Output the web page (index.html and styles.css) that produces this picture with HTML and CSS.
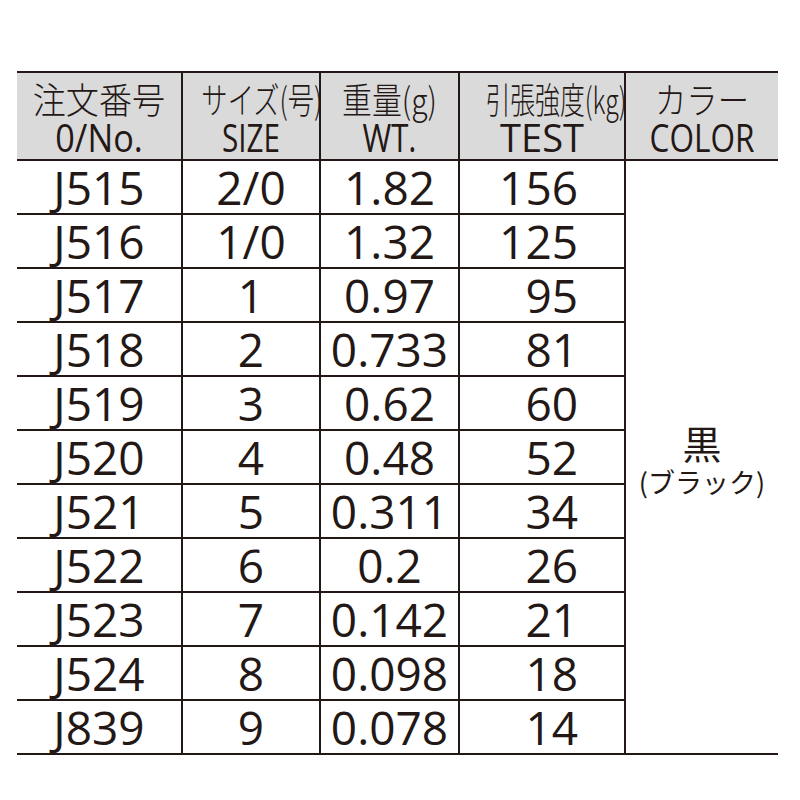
FILE: index.html
```html
<!DOCTYPE html>
<html lang="ja">
<head>
<meta charset="utf-8">
<title>Spec table</title>
<link rel="stylesheet" href="styles.css">
</head>
<body>
<table class="spec">
  <colgroup>
    <col class="c1"><col class="c2"><col class="c3"><col class="c4"><col class="c5">
  </colgroup>
  <thead>
    <tr>
      <th class="first"><span class="jp s94">注文番号</span><span class="en s90">0/No.</span></th>
      <th><span class="jp s74">サイズ(号)</span><span class="en s78">SIZE</span></th>
      <th><span class="jp s84">重量(g)</span><span class="en s82">WT.</span></th>
      <th><span class="jp s70">引張強度(kg)</span><span class="en s100">TEST</span></th>
      <th class="last"><span class="jp s89">カラー</span><span class="en s83">COLOR</span></th>
    </tr>
  </thead>
  <tbody>
    <tr><td class="first">J515</td><td>2/0</td><td>1.82</td><td class="test">156</td>
      <td class="last color" rowspan="11"><span class="kuro">黒</span><span class="black">(ブラック)</span></td></tr>
    <tr><td class="first">J516</td><td>1/0</td><td>1.32</td><td class="test">125</td></tr>
    <tr><td class="first">J517</td><td>1</td><td>0.97</td><td class="test">95</td></tr>
    <tr><td class="first">J518</td><td>2</td><td>0.733</td><td class="test">81</td></tr>
    <tr><td class="first">J519</td><td>3</td><td>0.62</td><td class="test">60</td></tr>
    <tr><td class="first">J520</td><td>4</td><td>0.48</td><td class="test">52</td></tr>
    <tr><td class="first">J521</td><td>5</td><td>0.311</td><td class="test">34</td></tr>
    <tr><td class="first">J522</td><td>6</td><td>0.2</td><td class="test">26</td></tr>
    <tr><td class="first">J523</td><td>7</td><td>0.142</td><td class="test">21</td></tr>
    <tr><td class="first">J524</td><td>8</td><td>0.098</td><td class="test">18</td></tr>
    <tr><td class="first">J839</td><td>9</td><td>0.078</td><td class="test">14</td></tr>
  </tbody>
</table>
</body>
</html>
```

FILE: styles.css
```css
html, body {
  margin: 0;
  padding: 0;
  background: #ffffff;
}

body {
  color: #231815;
  font-family: "Open Sans", "Noto Sans CJK JP", sans-serif;
}

.spec {
  border-collapse: collapse;
  table-layout: fixed;
  width: 761px;
  margin: 71px 0 0 17px;
}

.c1 { width: 165px; }
.c2 { width: 138px; }
.c3 { width: 139px; }
.c4 { width: 166px; }
.c5 { width: 153px; }

.spec th,
.spec td {
  border: 2px solid #231815;
  padding: 0;
  text-align: center;
}

.spec .first { border-left: none; }
.spec .last { border-right: none; }

.spec thead tr { height: 88px; }

.spec th {
  background: #dadada;
  font-weight: normal;
  vertical-align: top;
  padding-top: 5px;
  white-space: nowrap;
}

.jp {
  display: block;
  height: 40px;
  line-height: 40px;
  font-family: "Noto Sans CJK JP", sans-serif;
  font-weight: 300;
  font-size: 36px;
  transform-origin: center;
}

.en {
  display: block;
  height: 38px;
  line-height: 38px;
  font-family: "Open Sans", sans-serif;
  font-size: 38px;
  transform-origin: center;
}

.s70 { transform: scaleX(0.69); }
.s74 { transform: scaleX(0.73); }
.s78 { transform: scaleX(0.78); }
.s82 { transform: scaleX(0.82); }
.s83 { transform: scaleX(0.83); }
.s84 { transform: scaleX(0.83); }
.s89 { transform: scaleX(0.87); }
.s90 { transform: scaleX(0.90); }
.s94 { transform: scaleX(0.92); }
.s100 { transform: none; }

.spec tbody tr { height: 54px; }

.spec td {
  font-size: 46px;
  line-height: 50px;
  vertical-align: middle;
  white-space: nowrap;
}

.spec td.test {
  text-align: right;
  padding-right: 46px;
}

.spec td.color {
  vertical-align: middle;
  padding-top: 4px;
}

.kuro {
  display: block;
  font-family: "Noto Sans CJK JP", sans-serif;
  font-size: 39px;
  line-height: 46px;
}

.black {
  display: block;
  font-family: "Noto Sans CJK JP", sans-serif;
  font-size: 27px;
  line-height: 34px;
}
```
